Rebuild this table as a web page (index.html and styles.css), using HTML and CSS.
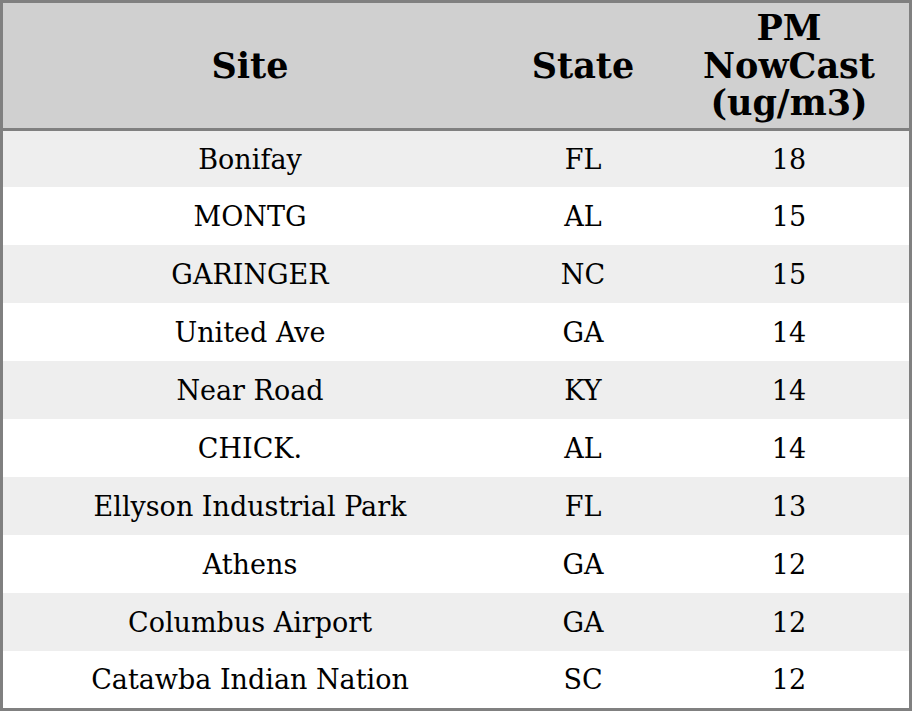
FILE: index.html
```html
<!DOCTYPE html>
<html>
<head>
<meta charset="utf-8">
<link rel="stylesheet" href="styles.css">
</head>
<body>
<div class="frame">
<table class="data">
  <colgroup>
    <col class="c-site">
    <col class="c-state">
    <col class="c-pm">
  </colgroup>
  <thead>
    <tr class="head"><th>Site</th><th>State</th><th>PM<br>NowCast<br>(ug/m3)</th></tr>
  </thead>
  <tbody>
    <tr class="r1"><td>Bonifay</td><td>FL</td><td>18</td></tr>
    <tr><td>MONTG</td><td>AL</td><td>15</td></tr>
    <tr><td>GARINGER</td><td>NC</td><td>15</td></tr>
    <tr><td>United Ave</td><td>GA</td><td>14</td></tr>
    <tr><td>Near Road</td><td>KY</td><td>14</td></tr>
    <tr><td>CHICK.</td><td>AL</td><td>14</td></tr>
    <tr><td>Ellyson Industrial Park</td><td>FL</td><td>13</td></tr>
    <tr><td>Athens</td><td>GA</td><td>12</td></tr>
    <tr><td>Columbus Airport</td><td>GA</td><td>12</td></tr>
    <tr class="rl"><td>Catawba Indian Nation</td><td>SC</td><td>12</td></tr>
  </tbody>
</table>
</div>
</body>
</html>
```
FILE: styles.css
```css
html, body {
  margin: 0;
  padding: 0;
  background: #ffffff;
}
.frame {
  width: 912px;
  height: 711px;
  box-sizing: border-box;
  border: 3px solid #808080;
}
.data {
  width: 906px;
  border-collapse: collapse;
  border-spacing: 0;
  table-layout: fixed;
  font-family: "DejaVu Serif", serif;
  color: #000;
}
.c-site { width: 494px; }
.c-state { width: 172px; }
.c-pm { width: 240px; }
.data th, .data td {
  padding: 0;
  text-align: center;
  vertical-align: middle;
}
.head th {
  height: 125px;
  background: #d0d0d0;
  font-size: 35px;
  line-height: 37.5px;
  font-weight: bold;
  border-bottom: 3px solid #808080;
}
.data td {
  height: 58px;
  font-size: 27px;
}
.data tbody tr:nth-child(odd) td {
  background: #eeeeee;
}
.data tbody tr.r1 td { height: 56px; }
.data tbody tr.rl td { height: 57px; }
```
